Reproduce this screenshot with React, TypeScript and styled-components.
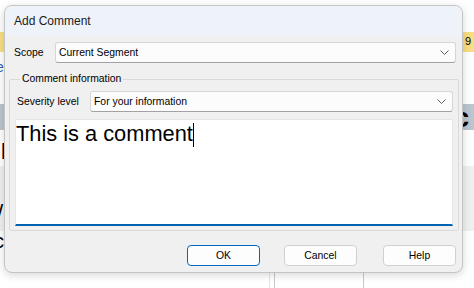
import styled, { createGlobalStyle } from 'styled-components';

const GlobalStyle = createGlobalStyle`
  html, body {
    margin: 0;
    padding: 0;
    background: #fff;
  }
  body {
    width: 474px;
    height: 288px;
    overflow: hidden;
    font-family: "Liberation Sans", Arial, sans-serif;
  }
`;

const Screen = styled.div`
  position: relative;
  width: 474px;
  height: 288px;
  overflow: hidden;
  background: #fff;
`;

// page behind the dialog, only its edges show
const Band = styled.div<{ $h: number; $bg?: string }>`
  height: ${p => p.$h}px;
  background: ${p => p.$bg ?? '#fff'};
  display: flex;
  justify-content: space-between;
  align-items: flex-start;
  overflow: hidden;
`;

const Peek = styled.span<{ $size: number; $color?: string; $bold?: boolean; $top: number; $shift?: number }>`
  font-size: ${p => p.$size}px;
  line-height: ${p => p.$size}px;
  color: ${p => p.$color ?? '#000'};
  font-weight: ${p => (p.$bold ? 700 : 400)};
  margin-top: ${p => p.$top}px;
  margin-left: ${p => p.$shift ?? 0}px;
  margin-right: ${p => -(p.$shift ?? 0)}px;
`;

const BottomGrid = styled.div`
  height: 57px;
  display: grid;
  grid-template-columns: 269px 5px 89px 1fr;
  overflow: hidden;
`;

const Cell = styled.div<{ $line?: string }>`
  border-left: ${p => (p.$line ? `1px solid ${p.$line}` : 'none')};
  overflow: hidden;
`;

const Dialog = styled.div`
  position: absolute;
  left: 4px;
  top: 5px;
  width: 459px;
  height: 268px;
  box-sizing: border-box;
  border: 1px solid #c4c4c4;
  border-radius: 8px;
  background: #f0f0f0;
  overflow: hidden;
  display: flex;
  flex-direction: column;
  box-shadow: 0 2px 8px rgba(0, 0, 0, 0.16);
  font-size: 10.4px;
  color: #000;
`;

const TitleBar = styled.div`
  height: 30px;
  flex: none;
  display: flex;
  align-items: center;
  padding-left: 9px;
  background: #eef2f9;
  font-size: 12px;
  color: #1b1b1b;
`;

const Body = styled.div`
  padding: 0 3px 0 4px;
  display: flex;
  flex-direction: column;
`;

const FieldRow = styled.div<{ $labelWidth: number; $indent: number }>`
  display: flex;
  align-items: center;
  padding-left: ${p => p.$indent}px;

  & > label {
    width: ${p => p.$labelWidth}px;
    flex: none;
  }
`;

const ScopeRow = styled(FieldRow)`
  margin-top: 6px;
  padding-right: 3px;
`;

const Combo = styled.div`
  flex: 1;
  height: 21px;
  box-sizing: border-box;
  display: flex;
  align-items: center;
  justify-content: space-between;
  padding: 0 6px 0 3px;
  background: #fcfcfc;
  border: 1px solid #d6d6d6;
  border-bottom-color: #a2a2a2;
  border-radius: 3px;
`;

const Group = styled.fieldset`
  margin: 9px 0 0 0;
  padding: 5px 5px 4px 5px;
  border: 1px solid #d9d9d9;
  border-radius: 2px;
  min-width: 0;

  & > legend {
    margin-left: 5px;
    padding: 0 2px;
    line-height: 14px;
  }
`;

const Editor = styled.div`
  margin-top: 7px;
  height: 107px;
  box-sizing: border-box;
  padding: 1px 0;
  background: #fff;
  border: 1px solid #e2e6eb;
  border-bottom: 2px solid #0063b1;
  font-size: 21.8px;
  line-height: 26px;
  color: #000;
`;

const Caret = styled.span`
  display: inline-block;
  width: 1px;
  height: 24px;
  margin-top: 2px;
  vertical-align: top;
  background: #000;
`;

const ButtonRow = styled.div`
  margin-top: 14px;
  padding-right: 3px;
  display: flex;
  justify-content: flex-end;
  gap: 24px;

  & > button:last-child {
    margin-left: 2px;
  }
`;

const Button = styled.button<{ $primary?: boolean }>`
  width: 73px;
  height: 21px;
  padding: 0;
  box-sizing: border-box;
  font-family: inherit;
  font-size: 10.4px;
  color: #000;
  background: #fdfdfd;
  border: 1px solid ${p => (p.$primary ? '#0067c0' : '#d0d0d0')};
  border-radius: 4px;
`;

const Chevron = () => (
  <svg width="9" height="5" viewBox="0 0 9 5">
    <polyline points="0.5,0.5 4.5,4.5 8.5,0.5" fill="none" stroke="#5f5f5f" strokeWidth="1" />
  </svg>
);

export default function App() {
  return (
    <Screen>
      <GlobalStyle />
      <Band $h={32} />
      <Band $h={20} $bg="#f8de82">
        <span />
        <Peek $size={11} $top={4} $shift={-3}>9</Peek>
      </Band>
      <Band $h={52}>
        <Peek $size={14} $color="#2a62b8" $top={8} $shift={-4}>e</Peek>
      </Band>
      <Band $h={26} $bg="#bac5cf">
        <span />
        <Peek $size={28} $bold $top={0} $shift={-5}>c</Peek>
      </Band>
      <Band $h={36}>
        <Peek $size={22} $top={11} $shift={1}>l</Peek>
      </Band>
      <Band $h={65} $bg="#f0f0f0">
        <Peek $size={22} $top={36} $shift={-3}>/</Peek>
      </Band>
      <BottomGrid>
        <Cell>
          <Peek $size={20} $top={8} $shift={-6}>c</Peek>
        </Cell>
        <Cell $line="#e4e4e4" />
        <Cell $line="#c9c9c9" />
        <Cell $line="#c9c9c9" />
      </BottomGrid>

      <Dialog>
        <TitleBar>Add Comment</TitleBar>
        <Body>
          <ScopeRow $labelWidth={41} $indent={5}>
            <label>Scope</label>
            <Combo>
              <span>Current Segment</span>
              <Chevron />
            </Combo>
          </ScopeRow>
          <Group>
            <legend>Comment information</legend>
            <FieldRow $labelWidth={73} $indent={2}>
              <label>Severity level</label>
              <Combo>
                <span>For your information</span>
                <Chevron />
              </Combo>
            </FieldRow>
            <Editor>
              This is a comment
              <Caret />
            </Editor>
          </Group>
          <ButtonRow>
            <Button $primary>OK</Button>
            <Button>Cancel</Button>
            <Button>Help</Button>
          </ButtonRow>
        </Body>
      </Dialog>
    </Screen>
  );
}
